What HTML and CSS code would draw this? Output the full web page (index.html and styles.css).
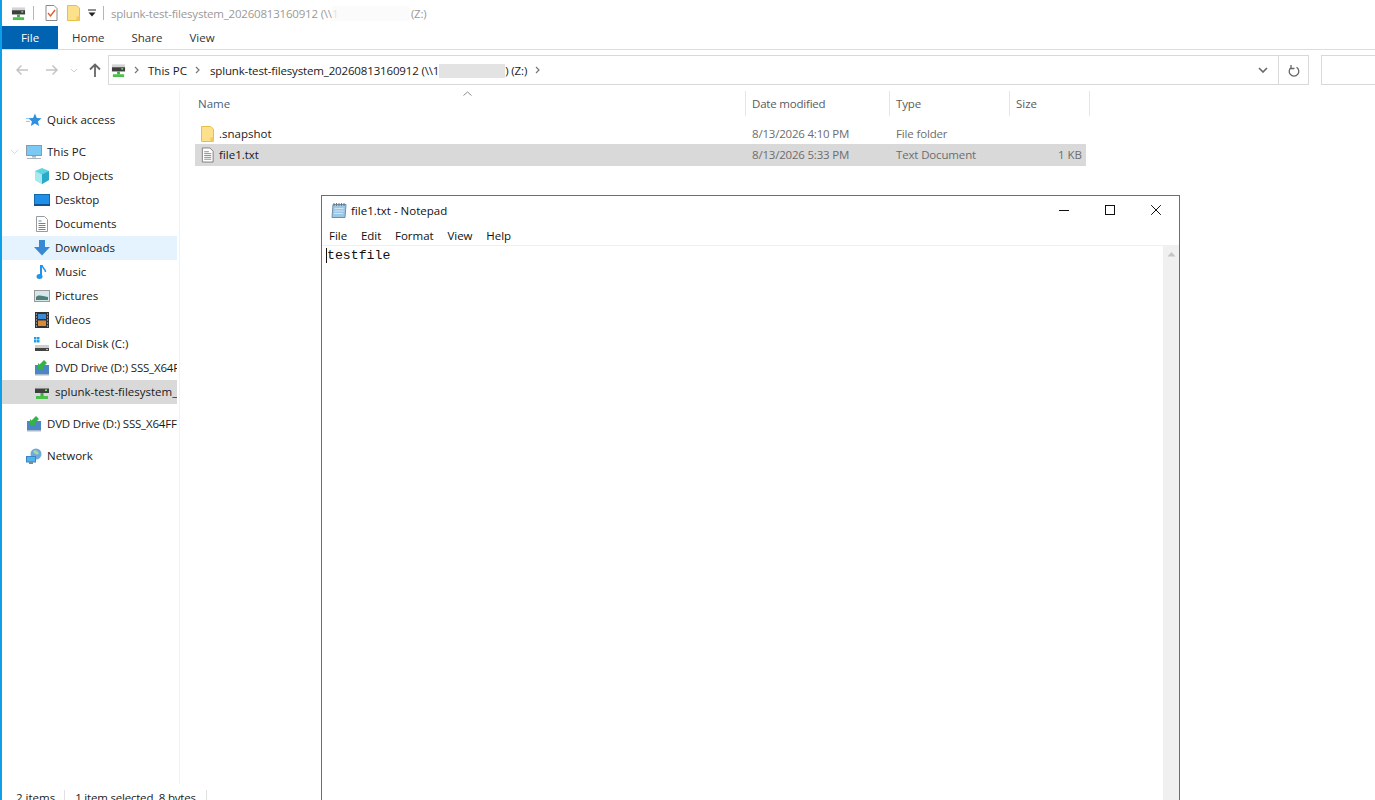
FILE: index.html
```html
<!DOCTYPE html>
<html lang="en">
<head>
  <meta charset="utf-8">
  <title>file1.txt - Notepad</title>
  <link rel="stylesheet" href="styles.css">
</head>
<body>
  <svg class="defs" width="0" height="0">
    <symbol id="i-drive" viewBox="0 0 16 16">
      <rect x="1" y="1.500" width="14" height="3" fill="#d4d4d4"/>
      <rect x="1" y="4.500" width="14" height="4.500" fill="#3f3f3f"/>
      <rect x="11" y="5.500" width="2" height="1.500" fill="#7fe07f"/>
      <rect x="6.500" y="9" width="3" height="3" fill="#3fae3f"/>
      <rect x="2" y="12" width="12" height="3" fill="#4cc04c"/>
    </symbol>
    <symbol id="i-folder" viewBox="0 0 13 16">
      <path d="M.5 .5h9l3 2.500v12.500h-12z" fill="#fce08c" stroke="#e8c049"/>
      <path d="M9.500 15.500v-4h3v4z" fill="#f3ca5b"/>
    </symbol>
    <symbol id="i-txt" viewBox="0 0 16 16">
      <path d="M2.500 .5h8l3.500 3.500v11.500h-11.500z" fill="#fff" stroke="#7d7d7d"/>
      <path d="M4.500 4.500h5M4.500 6.500h7.500M4.500 8.500h7.500M4.500 10.500h7.500M4.500 12.500h7.500" stroke="#8a8a8a"/>
    </symbol>
    <symbol id="i-dvd" viewBox="0 0 16 16">
      <path d="M1 5h14v9H1z" fill="#4d86c6"/>
      <path d="M1 14h14v1.500H1z" fill="#a9b9c9"/>
      <path d="M10 0L5.500 4.500 4 3v6h6L8.500 7.500 13 3z" fill="#35b34a"/>
    </symbol>
  </svg>

  <div class="explorer">
    <div class="titlebar">
      <svg class="icon-qa drive"><use href="#i-drive"/></svg>
      <span class="qa-sep"></span>
      <svg class="icon-qa props" viewBox="0 0 12 16">
        <path d="M.5 .5h8l3 3v12h-11z" fill="#fff" stroke="#8a8a8a"/>
        <path d="M2.500 8l2.500 3 4.500-6" fill="none" stroke="#e2572b" stroke-width="1.300"/>
      </svg>
      <svg class="icon-qa newfolder"><use href="#i-folder"/></svg>
      <svg class="icon-qa dropdown" viewBox="0 0 8 8">
        <path d="M0 1h8" stroke="#222"/><path d="M.5 3.500h7l-3.500 4z" fill="#222"/>
      </svg>
      <span class="qa-sep second"></span>
      <span class="title-text">splunk-test-filesystem_20260813160912 (\\<span class="blur-title">1</span>(Z:)</span>
    </div>

    <div class="ribbon">
      <div class="tab tab-file">File</div>
      <div class="tab tab-home">Home</div>
      <div class="tab tab-share">Share</div>
      <div class="tab tab-view">View</div>
    </div>

    <div class="navrow">
      <svg class="nav-btn back" viewBox="0 0 14 12"><path d="M13 6H2M6.500 1.500L2 6l4.500 4.500" fill="none" stroke="#c4c4c4" stroke-width="1.500"/></svg>
      <svg class="nav-btn forward" viewBox="0 0 14 12"><path d="M1 6h11M7.500 1.500L12 6l-4.500 4.500" fill="none" stroke="#c4c4c4" stroke-width="1.500"/></svg>
      <svg class="nav-btn recent" viewBox="0 0 8 5"><path d="M1 1l3 3 3-3" fill="none" stroke="#cfcfcf"/></svg>
      <svg class="nav-btn up" viewBox="0 0 12 14"><path d="M6 14V2M1 6.500L6 1.500l5 5" fill="none" stroke="#666" stroke-width="1.800"/></svg>
      <div class="addressbox">
        <svg class="addr-icon"><use href="#i-drive"/></svg>
        <svg class="crumb-arrow" viewBox="0 0 5 8"><path d="M1 1l3 3-3 3" fill="none" stroke="#777" stroke-width="1.200"/></svg>
        <span class="crumb crumb-pc">This PC</span>
        <svg class="crumb-arrow" viewBox="0 0 5 8"><path d="M1 1l3 3-3 3" fill="none" stroke="#777" stroke-width="1.200"/></svg>
        <span class="crumb crumb-fs">splunk-test-filesystem_20260813160912 (\\1<span class="blur-addr"></span>) (Z:)</span>
        <svg class="crumb-arrow" viewBox="0 0 5 8"><path d="M1 1l3 3-3 3" fill="none" stroke="#777" stroke-width="1.200"/></svg>
        <svg class="addr-drop" viewBox="0 0 10 6"><path d="M1 1l4 4 4-4" fill="none" stroke="#666" stroke-width="1.600"/></svg>
        <div class="refresh">
          <svg viewBox="0 0 12 13" width="12" height="13"><path d="M3.500 3.200a4.800 4.800 0 1 0 5 0M3 1v3.500h3.500" fill="none" stroke="#666" stroke-width="1.300"/></svg>
        </div>
      </div>
      <div class="searchbox"></div>
    </div>

    <div class="content">
      <nav class="sidebar">
        <div class="side-row top">
          <svg class="side-icon" viewBox="0 0 17 16"><path d="M9.500 1l2 4.800 5 .4-3.800 3.300 1.200 5-4.400-2.700-4.400 2.700 1.200-5-3.800-3.300 5-.4z" fill="#2f8fe0"/><path d="M0 6.500h3M0 9.500h4" stroke="#7fbdf0"/></svg>
          <span>Quick access</span>
        </div>
        <div class="side-row top group">
          <svg class="chev-open" viewBox="0 0 9 6"><path d="M1 1l3.500 3.500L8 1" fill="none" stroke="#d8d8d8"/></svg>
          <svg class="side-icon" viewBox="0 0 16 16"><rect x=".5" y="1.500" width="15" height="10" fill="#7cc9f5" stroke="#8c9aa5"/><path d="M6 12h4v1.500H6zM1 14h14v1H1z" fill="#a9b4bc"/></svg>
          <span>This PC</span>
        </div>
        <div class="side-row sub">
          <svg class="side-icon" viewBox="0 0 16 16"><path d="M8 0l7 3v9l-7 4-7-4V3z" fill="#5fd3de"/><path d="M8 6.500l7-3.500v9l-7 4z" fill="#2aa9c9"/><path d="M1 3l7 3.500V16l-7-4z" fill="#a6eaef"/></svg>
          <span>3D Objects</span>
        </div>
        <div class="side-row sub">
          <svg class="side-icon" viewBox="0 0 16 16"><rect x=".5" y="2.500" width="15" height="10" fill="#1f8fe8" stroke="#1668ad"/><rect x="0" y="12" width="16" height="2" fill="#12538e"/></svg>
          <span>Desktop</span>
        </div>
        <div class="side-row sub">
          <svg class="side-icon" viewBox="0 0 16 16"><path d="M2.500 .5h8l3 3v12h-11z" fill="#fff" stroke="#9a9a9a"/><path d="M4.500 5h3M4.500 7.500h7M4.500 9.500h7M4.500 11.500h7M4.500 13.500h7" stroke="#4a8ccb"/></svg>
          <span>Documents</span>
        </div>
        <div class="side-row sub active">
          <svg class="side-icon" viewBox="0 0 16 16"><path d="M5 0h6v7h5l-8 8.500L0 7h5z" fill="#3a87d4"/></svg>
          <span>Downloads</span>
        </div>
        <div class="side-row sub">
          <svg class="side-icon" viewBox="0 0 16 16"><path d="M7 1v10.500" stroke="#2196e8" stroke-width="2"/><ellipse cx="5.500" cy="12.500" rx="3" ry="2.500" fill="#2196e8"/><path d="M8 1c0 3 3.500 3.500 3.500 7" fill="none" stroke="#2196e8" stroke-width="1.500"/></svg>
          <span>Music</span>
        </div>
        <div class="side-row sub">
          <svg class="side-icon" viewBox="0 0 16 16"><rect x=".5" y="2.500" width="15" height="11" fill="#d5e7ec" stroke="#9a9a9a"/><path d="M2 9c3-3 6-1 12 0v3H2z" fill="#4d7f76"/></svg>
          <span>Pictures</span>
        </div>
        <div class="side-row sub">
          <svg class="side-icon" viewBox="0 0 16 16"><rect x="1" y="0" width="14" height="16" fill="#333"/><rect x="4" y="2" width="8" height="5" fill="#3b8ad6"/><rect x="4" y="8.500" width="8" height="5.500" fill="#d98a3a"/><path d="M2 2h1M2 5h1M2 8h1M2 11h1M2 14h1M13 2h1M13 5h1M13 8h1M13 11h1M13 14h1" stroke="#ddd"/></svg>
          <span>Videos</span>
        </div>
        <div class="side-row sub">
          <svg class="side-icon" viewBox="0 0 16 16"><path d="M0 1h2.500v2.500H0zM3 1h2.500v2.500H3zM0 4h2.500v2.500H0zM3 4h2.500v2.500H3z" fill="#1c9fe8"/><path d="M1 9h14v3H1z" fill="#cfcfcf"/><path d="M1 12h14v3H1z" fill="#444"/><rect x="12" y="13" width="2" height="1" fill="#8fe08f"/></svg>
          <span>Local Disk (C:)</span>
        </div>
        <div class="side-row sub">
          <svg class="side-icon"><use href="#i-dvd"/></svg>
          <span class="tight">DVD Drive (D:) SSS_X64F</span>
        </div>
        <div class="side-row sub selected">
          <svg class="side-icon"><use href="#i-drive"/></svg>
          <span>splunk-test-filesystem_</span>
        </div>
        <div class="side-row top group">
          <svg class="side-icon"><use href="#i-dvd"/></svg>
          <span class="tight">DVD Drive (D:) SSS_X64FF</span>
        </div>
        <div class="side-row top group">
          <svg class="side-icon" viewBox="0 0 16 16"><circle cx="10" cy="6" r="5.500" fill="#6fa8dc"/><path d="M7 3c3-2 5 0 6 3-3 1-5 0-6-3z" fill="#a8d8a0"/><rect x=".5" y="8.500" width="9" height="5.500" fill="#4fb3ec" stroke="#3a86c0"/><path d="M3 15h4" stroke="#7a8a96" stroke-width="2"/></svg>
          <span>Network</span>
        </div>
      </nav>

      <section class="filelist">
        <svg class="sort-caret" viewBox="0 0 9 5"><path d="M.5 4.500L4.500 1l4 3.500" fill="none" stroke="#8a8a8a"/></svg>
        <div class="list-head">
          <div class="col-name">Name</div>
          <div class="col-date">Date modified</div>
          <div class="col-type">Type</div>
          <div class="col-size">Size</div>
        </div>
        <div class="file-row">
          <div class="col-name"><svg class="file-icon folder"><use href="#i-folder"/></svg><span class="fname">.snapshot</span></div>
          <div class="col-date">8/13/2026 4:10 PM</div>
          <div class="col-type">File folder</div>
          <div class="col-size"></div>
        </div>
        <div class="file-row selected">
          <div class="col-name"><svg class="file-icon"><use href="#i-txt"/></svg><span class="fname">file1.txt</span></div>
          <div class="col-date">8/13/2026 5:33 PM</div>
          <div class="col-type">Text Document</div>
          <div class="col-size">1 KB</div>
        </div>
      </section>
    </div>

    <div class="statusbar">
      <span class="status-count">2 items</span>
      <span class="status-sel">1 item selected&nbsp; 8 bytes</span>
    </div>
  </div>

  <div class="notepad">
    <div class="np-title">
      <svg class="np-icon" viewBox="0 0 16 16">
        <path d="M2 2.500h13l-1 13H1z" fill="#9cc8e8" stroke="#6d8fa8"/>
        <path d="M3 1v3M5.500 1v3M8 1v3M10.500 1v3M13 1v3" stroke="#777"/>
        <path d="M3.500 6.500h9M3.500 9h9M3 11.500h9" stroke="#cde4f4"/>
      </svg>
      <span class="np-name">file1.txt - Notepad</span>
      <div class="np-controls">
        <svg viewBox="0 0 10 10"><path d="M0 5.500h10" stroke="#111"/></svg>
        <svg viewBox="0 0 10 10"><rect x=".5" y=".5" width="9" height="9" fill="none" stroke="#111"/></svg>
        <svg viewBox="0 0 10 10"><path d="M.2 .2l9.600 9.600M9.800 .2L.2 9.800" stroke="#111"/></svg>
      </div>
    </div>
    <div class="np-menu">
      <span>File</span><span>Edit</span><span>Format</span><span>View</span><span>Help</span>
    </div>
    <div class="np-body">
      <div class="np-text"><span class="np-caret"></span>testfile</div>
      <div class="np-scroll">
        <svg viewBox="0 0 9 6" width="9" height="6"><path d="M.5 5.500L4.500 1l4 4.500z" fill="#c4c4c4"/></svg>
      </div>
    </div>
  </div>
</body>
</html>
```

FILE: styles.css
```css
* {
  box-sizing: border-box;
}
html, body {
  margin: 0;
  height: 800px;
  overflow: hidden;
  background: #fff;
}
body {
  font-family: "Open Sans", "Noto Sans", sans-serif;
  font-size: 11.5px;
  color: #1a1a1a;
  position: relative;
}
.defs {
  position: absolute;
}

.explorer {
  height: 810px;
  border-left: 2px solid #0d9fe8;
  display: flex;
  flex-direction: column;
}

/* title bar */
.titlebar {
  height: 26px;
  display: flex;
  align-items: center;
  padding-left: 9px;
}
.icon-qa {
  width: 15px;
  height: 15px;
  flex: none;
}
.qa-sep {
  width: 1px;
  height: 14px;
  background: #b5b5b5;
  margin-left: 7px;
}
.props {
  width: 13px;
  height: 16px;
  margin-left: 11px;
}
.newfolder {
  width: 13px;
  height: 16px;
  margin-left: 9px;
}
.dropdown {
  width: 8px;
  height: 8px;
  margin-left: 8px;
}
.qa-sep.second {
  margin-left: 7px;
}
.title-text {
  margin-left: 7px;
  color: #9a9a9a;
  white-space: nowrap;
  letter-spacing: -.2px;
}
.blur-title {
  display: inline-block;
  width: 77px;
  color: #e4e4e4;
  margin-right: 2px;
  background: #fbfbfb;
}

/* ribbon */
.ribbon {
  height: 24px;
  display: flex;
  border-bottom: 1px solid #dcdcdc;
  color: #333;
}
.tab {
  line-height: 24px;
}
.tab-file {
  width: 56px;
  height: 23px;
  background: #0063b1;
  color: #fff;
  text-align: center;
}
.tab-home {
  margin-left: 14px;
}
.tab-share {
  margin-left: 27px;
}
.tab-view {
  margin-left: 27px;
}

/* navigation row */
.navrow {
  height: 40px;
  display: flex;
  align-items: center;
  padding-left: 13px;
}
.nav-btn {
  flex: none;
}
.back, .forward {
  width: 14px;
  height: 12px;
}
.forward {
  margin-left: 16px;
}
.recent {
  width: 8px;
  height: 5px;
  margin-left: 11px;
}
.up {
  width: 12px;
  height: 14px;
  margin-left: 11px;
}
.addressbox {
  width: 1201px;
  height: 30px;
  margin-left: 7px;
  flex: none;
  border: 1px solid #d9d9d9;
  display: flex;
  align-items: center;
  padding-left: 2px;
  white-space: nowrap;
}
.addr-icon {
  width: 15px;
  height: 15px;
  flex: none;
}
.crumb-arrow {
  width: 5px;
  height: 8px;
  margin-left: 8px;
  flex: none;
}
.crumb {
  margin-left: 9px;
  color: #1a1a1a;
}
.crumb-fs {
  margin-left: 10px;
  letter-spacing: -.15px;
}
.blur-addr {
  display: inline-block;
  width: 66px;
  height: 14px;
  background: #e3e3e3;
  vertical-align: -3px;
}
.addr-drop {
  width: 10px;
  height: 6px;
  margin-left: auto;
}
.refresh {
  width: 30px;
  height: 28px;
  margin-left: 10px;
  border-left: 1px solid #d9d9d9;
  display: flex;
  align-items: center;
  justify-content: center;
}
.searchbox {
  width: 60px;
  height: 30px;
  margin-left: 12px;
  flex: none;
  border: 1px solid #d9d9d9;
  border-right: 0;
}

/* main area */
.content {
  flex: 1;
  display: flex;
  min-height: 0;
}
.sidebar {
  width: 178px;
  flex: none;
  padding-top: 18px;
  border-right: 1px solid #f2f2f2;
}
.side-row {
  height: 24px;
  width: 175px;
  display: flex;
  align-items: center;
  white-space: nowrap;
  overflow: hidden;
  position: relative;
}
.side-row span {
  padding-bottom: 2px;
}
.side-row.top {
  padding-left: 24px;
}
.side-row.sub {
  padding-left: 32px;
}
.side-row.group {
  margin-top: 8px;
}
.side-row.active {
  background: #e5f3ff;
}
.side-row.selected {
  background: #d9d9d9;
}
.tight {
  letter-spacing: -.2px;
}
.side-icon {
  width: 16px;
  height: 16px;
  margin-right: 5px;
  flex: none;
}
.chev-open {
  position: absolute;
  left: 8px;
  top: 9px;
  width: 9px;
  height: 6px;
}

/* file list */
.filelist {
  flex: 1;
  position: relative;
  padding-left: 15px;
  color: #6d6d6d;
}
.sort-caret {
  position: absolute;
  left: 283px;
  top: 1px;
  width: 9px;
  height: 5px;
}
.list-head {
  display: flex;
  height: 27px;
  width: 896px;
  margin-left: -1px;
  color: #4c607a;
  align-items: center;
}
.list-head > div {
  height: 25px;
  line-height: 25px;
  border-right: 1px solid #e5e5e5;
  padding-left: 6px;
  flex: none;
}
.list-head .col-name {
  padding-left: 4px;
}
.col-name {
  width: 552px;
  color: #4c607a;
}
.col-date {
  width: 144px;
  letter-spacing: -.2px;
}
.col-type {
  width: 120px;
  letter-spacing: -.15px;
}
.col-size {
  width: 80px;
}
.list-head .col-date,
.list-head .col-type,
.list-head .col-size {
  color: #5a5a5a;
}
.file-row {
  display: flex;
  align-items: center;
  height: 21px;
  width: 891px;
  margin-top: 0;
}
.file-row.selected {
  height: 22px;
  padding-bottom: 2px;
  background: #d9d9d9;
}
.list-head + .file-row {
  margin-top: 6px;
}
.file-row > div {
  padding-left: 6px;
  flex: none;
  white-space: nowrap;
}
.file-row .col-name {
  width: 551px;
  color: #1a1a1a;
  display: flex;
  align-items: center;
  padding-left: 5px;
}
.file-row .col-size {
  width: 76px;
  text-align: right;
  padding-right: 4px;
}
.file-icon {
  width: 15px;
  height: 16px;
  flex: none;
}
.file-icon.folder {
  width: 13px;
  margin: 0 1px;
}
.file-row.selected .file-icon {
  margin-top: 2px;
}
.fname {
  margin-left: 4px;
}

/* status bar */
.statusbar {
  height: 26px;
  display: flex;
  align-items: center;
  padding-left: 14px;
  flex: none;
}
.status-count {
  padding-right: 9px;
  border-right: 1px solid #e0e0e0;
}
.status-sel {
  margin-left: 10px;
  padding-right: 10px;
  border-right: 1px solid #e0e0e0;
  letter-spacing: -.2px;
}

/* notepad window, floats over the explorer */
.notepad {
  position: absolute;
  left: 321px;
  top: 195px;
  width: 859px;
  height: 640px;
  background: #fff;
  border: 1px solid #6e6e6e;
  display: flex;
  flex-direction: column;
}
.np-title {
  height: 28px;
  display: flex;
  align-items: center;
  padding-left: 9px;
  flex: none;
}
.np-icon {
  width: 16px;
  height: 16px;
  flex: none;
}
.np-name {
  margin-left: 4px;
  color: #111;
}
.np-controls {
  margin-left: auto;
  display: flex;
  gap: 36px;
  padding-right: 18px;
}
.np-controls svg {
  width: 10px;
  height: 10px;
}
.np-menu {
  height: 21px;
  padding-top: 2px;
  display: flex;
  align-items: center;
  padding-left: 7px;
  gap: 13.700px;
  color: #111;
  flex: none;
}
.np-body {
  flex: 1;
  display: flex;
  border-top: 1px solid #f0f0f0;
}
.np-text {
  flex: 1;
  font-family: "Liberation Mono", monospace;
  font-size: 13.200px;
  color: #111;
  padding: 2px 0 0 5px;
  position: relative;
  line-height: 15px;
}
.np-caret {
  position: absolute;
  left: 4px;
  top: 2px;
  width: 1px;
  height: 15px;
  background: #111;
}
.np-scroll {
  width: 16px;
  background: #f0f0f0;
  display: flex;
  justify-content: center;
  align-items: flex-start;
  padding-top: 5px;
}
```
